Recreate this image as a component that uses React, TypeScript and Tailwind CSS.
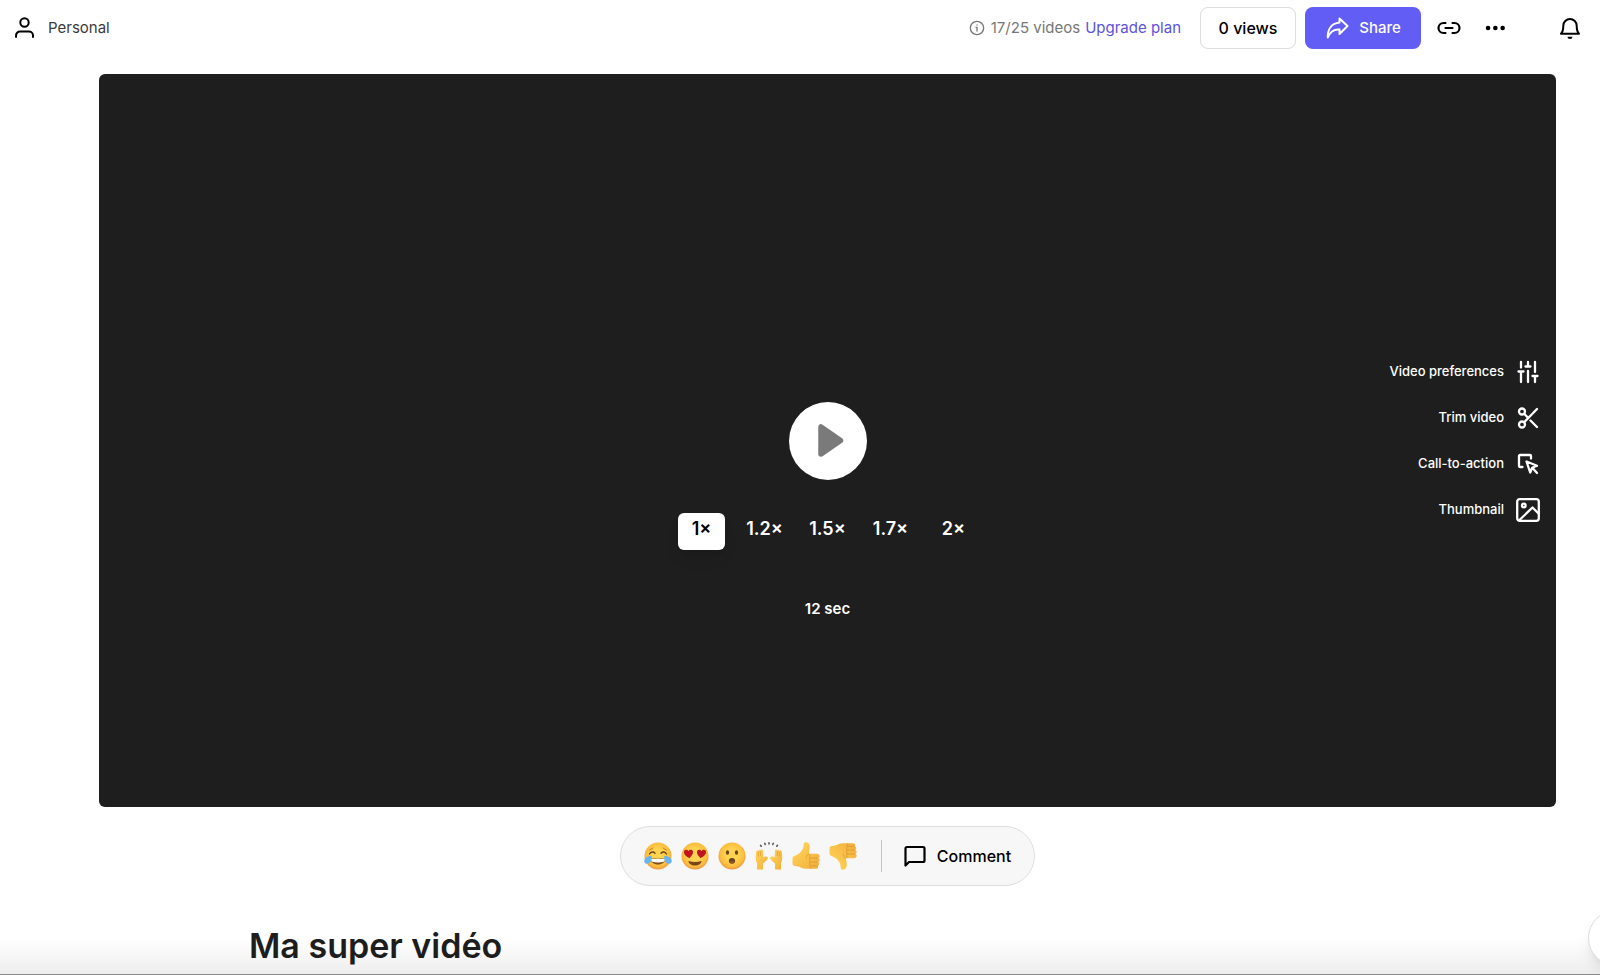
import { useState } from 'react';
import type { ReactNode } from 'react';

const speeds = ['1×', '1.2×', '1.5×', '1.7×', '2×'];

function Icon({ children, className = 'size-6', weight = 2 }: { children: ReactNode; className?: string; weight?: number }) {
    return (
        <svg
            viewBox="0 0 24 24"
            fill="none"
            stroke="currentColor"
            strokeWidth={weight}
            strokeLinecap="round"
            strokeLinejoin="round"
            aria-hidden="true"
            className={`shrink-0 ${className}`}
        >
            {children}
        </svg>
    );
}

const tools = [
    {
        label: 'Video preferences',
        icon: <path d="M5 2v5.5M2.5 11.5h5M5 11.5V22M12 2v4.5M9.5 6.5h5M12 11v11M19 2v10M16.5 16h5M19 16v6" />,
    },
    {
        label: 'Trim video',
        icon: (
            <>
                <circle cx="6" cy="5.5" r="3" />
                <circle cx="6" cy="18.5" r="3" />
                <path d="M21 3 8.2 16.2M8.2 7.8l3.8 4M14.5 14.5 21 21" />
            </>
        ),
    },
    {
        label: 'Call-to-action',
        icon: (
            <>
                <path d="M6.5 15H4a1 1 0 0 1-1-1V4a1 1 0 0 1 1-1h10a1 1 0 0 1 1 1v2.5" />
                <path d="m10.5 9.5 10.5 4.2-4.8 2-2 4.8zM17 16.5l4 4.5" />
            </>
        ),
    },
    {
        label: 'Thumbnail',
        icon: (
            <>
                <rect x="1.2" y="1.2" width="21.6" height="21.6" rx="2.5" />
                <circle cx="7.8" cy="7.5" r="1.8" />
                <path d="M3.5 22 16.5 9.5 23 16" />
            </>
        ),
    },
];

// shared by every reaction, rendered once at the top of the bar
function ReactionColors() {
    return (
        <svg className="absolute size-0" aria-hidden="true">
            <defs>
                <radialGradient id="face" cx="50%" cy="45%" r="55%">
                    <stop offset="0.4" stopColor="#fed350" />
                    <stop offset="0.8" stopColor="#fbbd3c" />
                    <stop offset="1" stopColor="#ee9445" />
                </radialGradient>
                <linearGradient id="hand" x1="0" y1="0" x2="1" y2="1">
                    <stop offset="0.3" stopColor="#fdcb52" />
                    <stop offset="1" stopColor="#f0ac3a" />
                </linearGradient>
            </defs>
        </svg>
    );
}

function Face({ children }: { children: ReactNode }) {
    return (
        <>
            <circle cx="14" cy="14" r="13.5" fill="url(#face)" />
            {children}
        </>
    );
}

function Thumb() {
    return (
        <>
            <path
                d="M.5 17c0-2 1-2.800 2.500-3.300 4-1.200 6.500-4 8-7.200.7-1.700.4-3.200.8-4.700C12.100.8 13 .3 14.200.3c2.300 0 3.600 2.200 3.600 5 0 2.400-.6 4.600-1 6.400H25c1.500 0 2.700 1 2.700 2.200s-.7 1.800-1.500 2.100c.8.300 1.400 1 1.400 2s-.7 1.800-1.500 2c.7.4 1.100 1 1.100 1.800 0 1-.7 1.700-1.600 1.900.4.300.6.800.6 1.300 0 1.100-.9 1.800-2.300 1.800H14c-3.500 0-5.500-1.300-7-2-1.300-.6-3-.6-4.500-.8C1 23.800.5 22.500.5 21z"
                fill="url(#hand)"
            />
            <path d="M16.800 11.700c-1.300.8-2.300 2.300-2.600 4" stroke="#df9a34" strokeWidth="0.9" strokeLinecap="round" fill="none" />
            <path d="M18.300 12.500c-1 1-1 2.500 0 3.500-1 1-1 3 0 4-1 1-.8 2.800.2 3.700-.8.8-.6 2.200.3 2.900M18.500 16h7.300M18.500 20h7.100M18.700 23.700h6.300" stroke="#dc962f" strokeWidth="0.8" strokeLinecap="round" fill="none" />
        </>
    );
}

const reactions = [
    {
        label: 'Joy',
        art: (
            <Face>
                <path d="M5.500 12c1.500-2.500 3.800-2.500 5.500-.8M17 11.200c1.700-1.700 4-1.700 5.500.8" stroke="#6b431b" strokeWidth="1.400" fill="none" strokeLinecap="round" />
                <path d="M5.500 8 9 6M22.500 8 19 6" stroke="#b9791f" strokeWidth="0.9" strokeLinecap="round" />
                <path d="M6.500 16c4.500 1 10.500 1 15 0 .2 4-3.300 6.500-7.500 6.500S6.300 20 6.500 16z" fill="#8a4d1c" />
                <path d="M7 16.500c4.500.8 9.500.8 14 0 0 1.800-.6 3-1.500 3.300-3.500.8-7.500.8-11 0-.9-.3-1.500-1.500-1.500-3.300z" fill="#fff" />
                <path d="M7.800 14C4 13.700.7 15.500.2 18.800c-.2 2.200 1.400 3.200 3.200 3 3.200-.3 4.600-4 4.400-7.800z" fill="#68b4ee" />
                <path d="M20.200 14c3.800-.3 7.100 1.500 7.600 4.800.2 2.200-1.400 3.200-3.200 3-3.200-.3-4.600-4-4.400-7.800z" fill="#68b4ee" />
            </Face>
        ),
    },
    {
        label: 'Heart eyes',
        art: (
            <Face>
                <path d="M8.500 16.200C5.500 14.800 2.800 12.500 3 9.800c.2-2.200 3.200-2.700 4.400-.6 1-1.800 4.200-2 4.600.4.400 2.400-1.600 4.700-3.500 6.600z" fill="#c0141e" />
                <path d="M19.500 16.200c3-1.400 5.700-3.700 5.500-6.400-.2-2.200-3.200-2.700-4.400-.6-1-1.800-4.200-2-4.600.4-.4 2.400 1.600 4.700 3.500 6.600z" fill="#c0141e" />
                <path d="M7.500 19c4 1.200 9 1.200 13 0 .2 2.700-3 4.500-6.500 4.500S7.300 21.700 7.500 19z" fill="#79461c" />
            </Face>
        ),
    },
    {
        label: 'Open mouth',
        art: (
            <Face>
                <ellipse cx="9.500" cy="10.500" rx="1.600" ry="2.200" fill="#68431f" />
                <ellipse cx="18.500" cy="10.500" rx="1.600" ry="2.200" fill="#68431f" />
                <ellipse cx="14" cy="18.800" rx="3.100" ry="2.900" fill="#68431f" />
                <ellipse cx="14" cy="20" rx="1.900" ry="1.200" fill="#8b5a2b" />
            </Face>
        ),
    },
    {
        label: 'Raised hands',
        art: (
            <>
                <path d="m5.500 3.300.7 1M9.800 1.300l.4 1.200M14 .8v1.300M18.200 1.300l-.4 1.200M22.500 3.300l-.7 1" stroke="#555" strokeWidth="1.500" strokeLinecap="round" />
                <path d="M2 27.500v-6C.3 18 .6 14 1.300 9.500c.2-1.300 1.700-1.300 1.900 0C3.400 7.300 5.400 7 5.600 8.800 6 7 8 7.200 8 9l.4 6.500c1.500-1.500 3.600-1 4.600.3-.8 2.200-2.800 4.500-5 5.700v6z" fill="url(#hand)" />
                <path d="M26 27.500v-6c1.700-3.500 1.400-7.500.7-12-.2-1.300-1.700-1.300-1.900 0-.2-2.200-2.200-2.500-2.400-.7C22 7 20 7.200 20 9l-.4 6.500c-1.500-1.500-3.600-1-4.600.3.800 2.200 2.800 4.500 5 5.700v6z" fill="url(#hand)" />
                <path d="M3.300 9.500v5M5.600 9v5M24.700 9.500v5M22.400 9v5" stroke="#e5962e" strokeWidth="0.7" />
            </>
        ),
    },
    { label: 'Thumbs up', art: <Thumb /> },
    { label: 'Thumbs down', art: <g transform="matrix(1 0 0 -1 0 28)"><Thumb /></g> },
];

function Header() {
    return (
        <header className="flex h-14 items-center pl-3 pr-[18px]">
            <a href="#personal" className="flex items-center gap-3">
                <Icon>
                    <circle cx="12.500" cy="6.500" r="4.200" />
                    <path d="M4 21v-1.500a4 4 0 0 1 4-4h9a4 4 0 0 1 4 4V21" />
                </Icon>
                <span className="text-[15px] text-[#3a3a3a]">Personal</span>
            </a>

            <div className="ml-auto flex items-center">
                <Icon className="mr-[6px] size-4 text-[#777]">
                    <circle cx="12" cy="12" r="10" />
                    <path d="M10.500 11H12v5.500M12 7.200v.3" />
                </Icon>
                <span className="mr-[5px] text-[15px] text-[#777]">17/25 videos</span>
                <a href="#upgrade" className="mr-[19px] text-[15px] text-[#5b53dc]">Upgrade plan</a>
                <button type="button" className="mr-[9px] h-[42px] w-24 rounded-lg border border-[#dcdcdc] font-medium">
                    0 views
                </button>
                <button type="button" className="mr-4 flex h-[42px] w-[116px] items-center justify-center gap-[10px] rounded-lg bg-[#625df5] text-[15px] font-medium text-white">
                    <Icon>
                        <path d="M14.500 2.500 22.500 10l-8 8v-4.500C9 13 5 16 2.800 21.500 2.500 14 6 7.500 14.500 6.500z" />
                    </Icon>
                    Share
                </button>
                <button type="button" aria-label="Copy link" className="mr-[22px]">
                    <Icon weight={2.2}>
                        <path d="M8.500 17H6.500a5 5 0 0 1 0-10h2M15.500 7h2a5 5 0 0 1 0 10h-2M8.500 12h7" />
                    </Icon>
                </button>
                <button type="button" aria-label="More" className="mr-[51px]">
                    <Icon weight={4.5}>
                        <path d="M5 12h.1M12.300 12h.1M19.600 12h.1" />
                    </Icon>
                </button>
                <button type="button" aria-label="Notifications">
                    <Icon>
                        <path d="M3 17.800h18c-2-2-2.300-4-2.300-8a6.700 6.700 0 0 0-13.400 0c0 4-.3 6-2.300 8z" />
                        <path d="M9.500 20.800h5a2.500 2.300 0 0 1-5 0z" fill="currentColor" stroke="none" />
                    </Icon>
                </button>
            </div>
        </header>
    );
}

function Player() {
    const [speed, setSpeed] = useState('1×');

    return (
        <section className="grid aspect-[1457/733] grid-cols-[1fr_auto_1fr] rounded-md bg-[#1e1e1e] text-white">
            <div className="col-start-2 grid grid-rows-[1fr_auto_1fr] justify-items-center">
                <button type="button" aria-label="Play" className="row-start-2 size-[78px] rounded-full bg-white">
                    <svg viewBox="0 0 78 78" aria-hidden="true">
                        <path d="M32 25v27l19.500-13.500z" fill="#7a7a7a" stroke="#7a7a7a" strokeWidth="5.500" strokeLinejoin="round" />
                    </svg>
                </button>
                <div className="row-start-3 pt-[33px] text-center">
                    <div className="flex gap-4">
                        {speeds.map(s => (
                            <button
                                key={s}
                                type="button"
                                onClick={() => setSpeed(s)}
                                className={`h-[37px] w-[47px] rounded-md pb-1 text-lg font-semibold ${s === speed ? 'bg-white text-black shadow-lg' : ''}`}
                            >
                                {s}
                            </button>
                        ))}
                    </div>
                    <p className="mt-12 text-[15px] font-semibold">12 sec</p>
                </div>
            </div>

            <div className="flex flex-col items-end justify-center gap-4 pr-4 text-[13px] font-medium">
                {tools.map(t => (
                    <button key={t.label} type="button" className="flex h-[30px] items-center gap-3">
                        {t.label}
                        <Icon weight={2.3}>{t.icon}</Icon>
                    </button>
                ))}
            </div>
        </section>
    );
}

export default function App() {
    return (
        <main className="min-h-screen overflow-hidden bg-white font-['Inter','Liberation_Sans',sans-serif] text-base text-black">
            <Header />

            <div className="ml-[99px] mr-11 mt-[18px]">
                <Player />

                <div className="mx-auto mt-[19px] flex h-[60px] w-fit items-center rounded-full border border-[#dedede] bg-[#f7f7f7] px-[23px]">
                    <ReactionColors />
                    <div className="flex gap-[9px]">
                        {reactions.map(r => (
                            <button key={r.label} type="button" aria-label={r.label}>
                                <svg viewBox="0 0 28 28" className="size-7" aria-hidden="true">{r.art}</svg>
                            </button>
                        ))}
                    </div>
                    <div className="ml-6 mr-[21px] h-8 w-px bg-[#c4c4c4]" />
                    <button type="button" className="flex items-center gap-[10px] font-medium">
                        <Icon weight={2.2}>
                            <path d="M2.500 21.500V4.500A1.500 1.500 0 0 1 4 3h16a1.500 1.500 0 0 1 1.500 1.500v12A1.500 1.500 0 0 1 20 18H6z" />
                        </Icon>
                        Comment
                    </button>
                </div>

                <h1 className="ml-[150px] mt-10 text-[34px] leading-10 font-semibold text-[#1e1e1e]">Ma super vidéo</h1>
            </div>

            <div className="pointer-events-none fixed inset-x-0 bottom-0 h-9 border-b border-[#8a8a8a] bg-linear-to-b from-transparent to-black/7" />
            <button type="button" aria-label="Help" className="fixed -right-11 bottom-[9px] size-14 rounded-full border border-[#dcdcdc] bg-white shadow-lg" />
        </main>
    );
}
